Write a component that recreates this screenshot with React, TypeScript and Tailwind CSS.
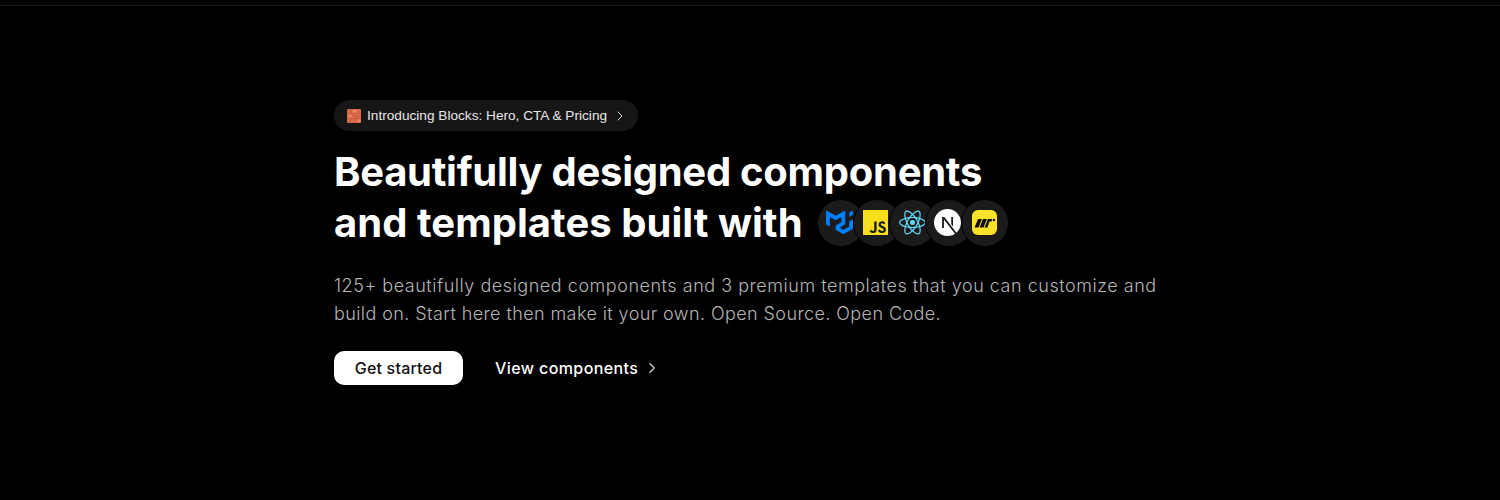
import { ChevronRight } from "lucide-react";
import { SiJavascript, SiMui, SiNextdotjs, SiReact } from "react-icons/si";

function BrickIcon() {
  return (
    <svg viewBox="0 0 14 14" className="h-[14px] w-[14px]">
      <rect width="14" height="14" rx="1" fill="#d9684a" />
      <path d="M0 4.5H14M0 9.5H14M4.5 0V4.5M10 4.5V9.5M3 9.5V14M9 9.5V14" stroke="#c65d42" strokeWidth="0.6" />
      <rect x="5.5" y="1" width="4" height="2.5" fill="#ea8a6c" />
      <rect x="1" y="5.5" width="4" height="3" fill="#e57f60" />
      <rect x="10.5" y="10.5" width="3" height="2.5" fill="#e88568" />
    </svg>
  );
}

function TreasuryLogo() {
  return (
    <svg viewBox="0 0 25 25" className="h-[25px] w-[25px]">
      <rect width="25" height="25" rx="6" fill="#fde22a" />
      <path d="M2.5 17.5 6 9H10L6.5 17.5ZM7.5 17.5 11 9H15L11.5 17.5ZM12.5 17.5 16 9H20.5L19.5 11.5H17.5L15.5 17.5Z" fill="#111" />
      <circle cx="22" cy="10" r="1.2" fill="#111" />
    </svg>
  );
}

function TechCircle({ className = "", children }: { className?: string; children: React.ReactNode }) {
  return (
    <span className={`relative flex h-[48px] w-[48px] items-center justify-center rounded-full border border-black bg-[#1b1b1b] ${className}`}>
      {children}
    </span>
  );
}

export default function App() {
  return (
    <div className="h-[500px] overflow-hidden bg-black font-['Inter',sans-serif]">
      {/* Nav bottom edge */}
      <div className="h-[6px] border-b border-[#1c1c1c]" />

      <div className="ml-[334px] pt-[94px]">
        <a className="inline-flex h-[31px] items-center rounded-full bg-[#161616] pl-[13px] pr-[10px] font-['Liberation_Sans',sans-serif] text-[13.65px] text-[#e8e8e8]">
          <BrickIcon />
          <span className="ml-[6px] pt-[2px]">Introducing Blocks: Hero, CTA &amp; Pricing</span>
          <ChevronRight className="ml-[5px] h-4 w-4 text-[#d8d8d8]" strokeWidth={1.5} />
        </a>

        <h1 className="mt-[15px] text-[40px] leading-[51px] font-bold text-white">
          <div className="tracking-[-0.27px]">Beautifully designed components</div>
          <div className="flex items-center">
            <span className="tracking-[0.04px]">and templates built with</span>
            <div className="ml-[14px] flex">
              <TechCircle>
                <SiMui className="-ml-[2px] h-[27px] w-[27px] text-[#007fff]" />
              </TechCircle>
              <TechCircle className="-ml-[12px]">
                <SiJavascript className="-ml-[2px] h-[25px] w-[25px] text-[#f7df1e]" />
              </TechCircle>
              <TechCircle className="-ml-[12px]">
                <SiReact className="h-[27px] w-[27px] text-[#61dafb]" />
              </TechCircle>
              <TechCircle className="-ml-[12px]">
                <SiNextdotjs className="-ml-[2px] h-[27px] w-[27px] text-white" />
              </TechCircle>
              <TechCircle className="-ml-[12px]">
                <TreasuryLogo />
              </TechCircle>
            </div>
          </div>
        </h1>

        <p className="mt-[24px] w-[840px] text-lg leading-[28px] font-light text-[#b5b5b5]">
          <span className="block tracking-[0.53px]">
            125+ beautifully designed components and 3 premium templates that you can customize and
          </span>
          <span className="block tracking-[0.41px]">
            build on. Start here then make it your own. Open Source. Open Code.
          </span>
        </p>

        <div className="mt-[23px] flex items-center">
          <button className="h-[34px] w-[129px] rounded-[10px] bg-white text-base font-medium tracking-[0.2px] text-[#111]">
            Get started
          </button>
          <a className="ml-[32px] flex items-center text-base font-medium tracking-[0.4px] text-white">
            View components
            <ChevronRight className="ml-[5px] h-[18px] w-[18px] text-[#d8d8d8]" strokeWidth={1.5} />
          </a>
        </div>
      </div>
    </div>
  );
}
